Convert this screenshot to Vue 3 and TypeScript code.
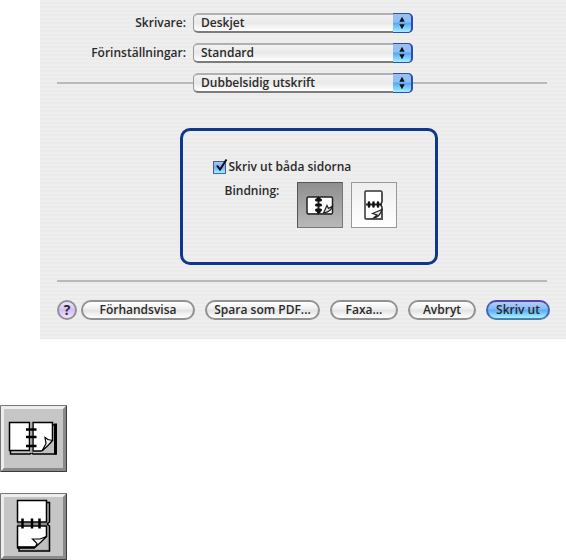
<script setup lang="ts">
import { ref } from 'vue'

type Binding = 'long' | 'short'

interface Popup {
  id: string
  label: string
  options: string[]
}

const settings: Popup[] = [
  { id: 'printer', label: 'Skrivare:', options: ['Deskjet'] },
  { id: 'preset', label: 'Förinställningar:', options: ['Standard'] },
]
const panes: string[] = ['Dubbelsidig utskrift']
const bothSides = ref<boolean>(true)
const binding = ref<Binding>('long')
</script>

<template>
  <main class="page">
    <form class="dialog" @submit.prevent>
      <div v-for="s in settings" :key="s.id" class="row">
        <label class="row-label" :for="s.id">{{ s.label }}</label>
        <div class="popup">
          <select :id="s.id">
            <option v-for="o in s.options" :key="o">{{ o }}</option>
          </select>
          <svg class="arrows" viewBox="0 0 20 20" aria-hidden="true">
            <path d="M10 3 13 8.5H7ZM7 11.5H13L10 17Z" />
          </svg>
        </div>
      </div>
      <div class="row pane-row">
        <span class="rule"></span>
        <div class="popup">
          <select aria-label="Panel">
            <option v-for="p in panes" :key="p">{{ p }}</option>
          </select>
          <svg class="arrows" viewBox="0 0 20 20" aria-hidden="true">
            <path d="M10 3 13 8.5H7ZM7 11.5H13L10 17Z" />
          </svg>
        </div>
        <span class="rule"></span>
      </div>

      <section class="group">
        <label class="check">
          <span class="box">
            <input v-model="bothSides" type="checkbox" />
            <svg v-if="bothSides" class="tick" viewBox="0 0 16 16" aria-hidden="true">
              <path d="M4 7.5 7 11.5 13.5 1.5" />
            </svg>
          </span>
          Skriv ut båda sidorna
        </label>
        <div class="binding">
          <span class="binding-label">Bindning:</span>
          <button
            type="button"
            class="mode"
            :class="{ on: binding === 'long' }"
            aria-label="Långsida"
            @click="binding = 'long'"
          >
            <svg viewBox="0 0 44 44" aria-hidden="true">
              <path d="M9 15.5Q9 14 10.5 14H20L21 15.5 22 14H33Q34.5 14 34.5 15.5V29.5Q34.5 31 33 31H23L21 30 20 31H10.5Q9 31 9 29.5Z" fill="#fff" stroke="#222" stroke-width="1.5" />
              <path d="M10 31H20L21 30 23 31H34" fill="none" stroke="#444" stroke-width="2" />
              <path d="M20.5 14V30" stroke="#222" stroke-width="2" />
              <path d="M20.5 13 23.5 17H17.5ZM20.5 32 23.5 27H17.5Z" fill="#111" />
              <path d="M18.5 17H22.5M18.5 22H22.5M18.5 27H22.5" stroke="#111" stroke-width="3" stroke-linecap="round" />
              <path d="M25.5 30 29 22.5 30.5 25.5 34.5 23Q33 29 25.5 30Z" fill="#e4e4e4" stroke="#222" stroke-width="1.2" />
            </svg>
          </button>
          <button
            type="button"
            class="mode"
            :class="{ on: binding === 'short' }"
            aria-label="Kortsida"
            @click="binding = 'short'"
          >
            <svg viewBox="0 0 44 44" aria-hidden="true">
              <path d="M13 9Q13 8 14 8H28.5Q30 8 30 9.5V19L28.5 21.5 30 24V34.5Q30 36 28.5 36H14Q13 36 13 35Z" fill="#fff" stroke="#333" stroke-width="1.5" />
              <path d="M30 10V19M30 25V36H15" fill="none" stroke="#555" stroke-width="2" />
              <path d="M14 21.5H30" stroke="#222" stroke-width="2" />
              <path d="M17 19.5V23.5M21.5 19.5V23.5M26 19.5V23.5" stroke="#111" stroke-width="2.5" stroke-linecap="round" />
              <path d="M20.5 30.5 30 26.5Q28 34 21.5 35L25 32Z" fill="#e4e4e4" stroke="#222" stroke-width="1.2" />
            </svg>
          </button>
        </div>
      </section>

      <footer class="footer">
        <button type="button" class="help" aria-label="Hjälp">?</button>
        <button type="button" class="pill preview">Förhandsvisa</button>
        <button type="button" class="pill pdf">Spara som PDF...</button>
        <button type="button" class="pill short">Faxa...</button>
        <button type="button" class="pill short">Avbryt</button>
        <button type="submit" class="pill primary">Skriv ut</button>
      </footer>
    </form>

    <div class="legend">
      <svg class="tile" viewBox="0 0 67 67" role="img" aria-label="Bindning längs långsidan">
        <path d="M0 0H67V67H0Z" fill="#c6c6c6" />
        <path d="M0 0H67L63 4H4V63L0 67Z" fill="#ededed" />
        <path d="M67 0V67H0L4 63H63V4Z" fill="#8a8a8a" />
        <path d="M66.5 0V66.5H0" fill="none" stroke="#3a3a3a" />
        <path d="M0.5 67V0.5H67" fill="none" stroke="#777" />
        <path d="M10.5 46V49H30L31.5 47.5 33 49H56V20H53" fill="#c6c6c6" stroke="#000" stroke-width="1.5" />
        <path d="M55.5 18.5V49.5" stroke="#000" stroke-width="3" />
        <path d="M9.5 17.5H29.5V45.5H9.5Z" fill="#fff" stroke="#000" stroke-width="1.5" />
        <path d="M33 17.5H52.5V35L42 46H33Z" fill="#fff" stroke="#000" stroke-width="1.5" />
        <path d="M53.5 35.5V48H42L41.5 46.5Z" fill="#c0c0c0" />
        <path d="M42 46 46 38.5 45 32.5 48 34.5 52.5 35.5 48.5 40Z" fill="#eee" stroke="#000" stroke-width="1.2" />
        <path d="M31.2 17V48" stroke="#aaa" stroke-width="2" />
        <path d="M26 24.5H36.5M26 32H36.5M26 41H36.5" stroke="#000" stroke-width="2.5" />
      </svg>
      <svg class="tile" viewBox="0 0 67 67" role="img" aria-label="Bindning längs kortsidan">
        <path d="M0 0H67V67H0Z" fill="#c6c6c6" />
        <path d="M0 0H67L63 4H4V63L0 67Z" fill="#ededed" />
        <path d="M67 0V67H0L4 63H63V4Z" fill="#8a8a8a" />
        <path d="M66.5 0V66.5H0" fill="none" stroke="#3a3a3a" />
        <path d="M0.5 67V0.5H67" fill="none" stroke="#777" />
        <path d="M46 9.5H49.5V29L47 31 49.5 33V58H19V55" fill="#b0b0b0" stroke="#000" stroke-width="1.5" />
        <path d="M17.5 7.5H46.5V29H17.5Z" fill="#fff" stroke="#000" stroke-width="1.5" />
        <path d="M17.5 33H46.5V43.5L35 54.5H17.5Z" fill="#fff" stroke="#000" stroke-width="1.5" />
        <path d="M47.5 44V56H34.5V54.5Z" fill="#c0c0c0" />
        <path d="M17 54.5H35" stroke="#000" stroke-width="2.5" />
        <path d="M35 54.5 37 50.5 32.5 46 40 46 46.5 43.5 41 49Z" fill="#eee" stroke="#000" stroke-width="1.2" />
        <path d="M17 31H47" stroke="#888" stroke-width="2" />
        <path d="M22.5 25.5V35.5M32 25.5V35.5M39.5 25.5V35.5" stroke="#000" stroke-width="2.5" />
      </svg>
    </div>
  </main>
</template>

<style>
body {
  margin: 0;
  background: #fff;
}
</style>

<style scoped>
.page {
  font-family: 'Open Sans', 'Noto Sans', sans-serif;
  font-size: 12px;
  font-weight: 600;
  line-height: 16px;
  color: #2a2a2a;
}

.dialog {
  display: flex;
  flex-direction: column;
  margin-left: 40px;
  padding: 13px 16px 19px 17px;
  background: repeating-linear-gradient(#eee 0 2px, #ebebeb 2px 4px);
}

.row {
  display: grid;
  grid-template-columns: 129px 220px 1fr;
  column-gap: 7px;
  align-items: center;
  margin-bottom: 10px;
}

.row-label {
  text-align: right;
}

.pane-row {
  grid-template-columns: 136px 220px 1fr;
  column-gap: 0;
  margin: 0 3px 0 0;
}

.rule {
  height: 2px;
  background: #b9b9b9;
}

.popup {
  position: relative;
}

select {
  display: block;
  width: 100%;
  height: 20px;
  padding: 0 24px 0 7px;
  appearance: none;
  font: inherit;
  color: inherit;
  border: 1px solid #999;
  border-top: 2px solid #b0b0b0;
  border-bottom: 2px solid #7c7c7c;
  border-radius: 5px;
  background: linear-gradient(#f2f2f2, #e9e9e9 50%, #fff);
}

.arrows {
  position: absolute;
  top: 0;
  right: 0;
  box-sizing: border-box;
  width: 20px;
  height: 20px;
  border: solid #2b4fae;
  border-width: 1px 2px 1px 0;
  border-radius: 0 5px 5px 0;
  background: linear-gradient(#9fbdf0, #88c0f8 45%, #55a5f5 50%, #a4f0ff);
  fill: #111;
  pointer-events: none;
}

.group {
  align-self: center;
  box-sizing: border-box;
  width: 258px;
  margin: 35px 0 15px 10px;
  padding: 28px 30px 34px;
  border: 3px solid #10388a;
  border-radius: 10px;
}

.check {
  display: flex;
  align-items: center;
  gap: 3px;
}

.box {
  position: relative;
  display: flex;
}

.box input {
  box-sizing: border-box;
  width: 13px;
  height: 13px;
  margin: 0;
  appearance: none;
  border: 1px solid #4b5a94;
  border-bottom-color: #3c6e96;
  background: linear-gradient(#a9c4f2, #70b2f4 50%, #a5eeff);
}

.tick {
  position: absolute;
  left: 0;
  bottom: 0;
  width: 16px;
  height: 16px;
  fill: none;
  stroke: #111;
  stroke-width: 2;
  pointer-events: none;
}

.binding {
  display: flex;
  gap: 8px;
  margin-top: 7px;
}

.binding-label {
  width: 64px;
  padding: 1px 0 0 12px;
}

.mode {
  width: 46px;
  height: 46px;
  padding: 0;
  border: 1px solid #999;
  background: linear-gradient(#eee, #fff);
}

.mode.on {
  border-color: #555 #777 #777 #555;
  background: linear-gradient(#8f8f8f, #b8b8b8);
}

.mode svg {
  display: block;
}

.footer {
  display: flex;
  align-items: center;
  gap: 10px;
  margin-right: 3px;
  padding-top: 18px;
  border-top: 2px solid #b9b9b9;
}

.help,
.pill {
  flex: none;
  box-sizing: border-box;
  height: 20px;
  padding: 0;
  font: inherit;
  color: inherit;
  white-space: nowrap;
  border: 2px solid #929292;
  border-radius: 10px;
  background: linear-gradient(#fff, #eee 45%, #e2e2e2 50%, #fff);
}

.help {
  width: 20px;
  margin-right: -6px;
  font-size: 14px;
  font-weight: 700;
  background: linear-gradient(#f0e6ff, #d2bdf8 50%, #f3e5ff);
}

.preview {
  width: 114px;
}

.pdf {
  width: 115px;
}

.short {
  width: 68px;
}

.primary {
  width: 64px;
  border-color: #5046a8 #3f65b5 #477fae;
  background: linear-gradient(#b5cdf6, #80baf8 45%, #5ba9f5 50%, #a8f3ff);
}

.legend {
  display: grid;
  justify-items: start;
  gap: 21px;
  padding-top: 66px;
}

.tile {
  display: block;
  width: 67px;
  height: 67px;
}
</style>
